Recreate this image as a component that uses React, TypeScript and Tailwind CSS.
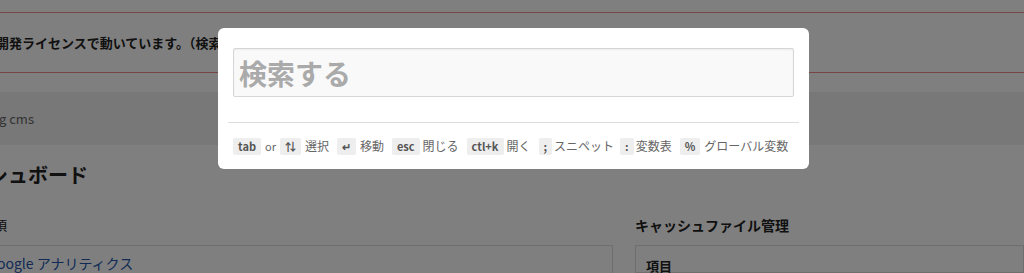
import React from 'react';

const font = { fontFamily: '"Noto Sans CJK JP", "Noto Sans", sans-serif' };

function Kbd({ children }: { children: React.ReactNode }) {
  return (
    <span className="inline-flex h-[17px] items-center rounded-[2px] bg-[#eeeeee] px-[5px] text-[11px] font-bold leading-none text-[#555]">
      {children}
    </span>
  );
}

export default function App() {
  return (
    <div className="relative h-[273px] w-[1024px] overflow-hidden bg-white text-[#333]" style={font}>
      {/* page underneath */}
      <div className="h-[12px]" />
      <div className="flex h-[61px] items-center border-y border-[#f08a8a] bg-white">
        <p className="-ml-[4px] whitespace-nowrap text-[13px] font-bold text-[#222]">
          開発ライセンスで動いています。（検索エンジンからのアクセスを拒否しています）
        </p>
      </div>
      <div className="h-[19px]" />
      <div className="flex h-[53px] items-center bg-[#f0f0f0]">
        <span className="-ml-[1px] text-[13px] text-[#666]">g cms</span>
      </div>
      <div className="flex h-[60px] items-center">
        <h1 className="-ml-[12px] whitespace-nowrap text-[20px] font-bold text-[#222]">シュボード</h1>
      </div>
      <div className="flex">
        <div className="w-[613px]">
          <div className="flex h-[40px] items-center">
            <span className="-ml-[19px] whitespace-nowrap text-[13px] text-[#222]">事項</span>
          </div>
          <div className="h-[28px] border-t border-r border-[#ddd] pt-[4px]">
            <span className="-ml-[3px] whitespace-nowrap text-[14px] text-[#2255aa]">oogle アナリティクス</span>
          </div>
        </div>
        <div className="ml-[22px] flex-1">
          <div className="flex h-[40px] items-center">
            <span className="text-[14px] font-bold text-[#222]">キャッシュファイル管理</span>
          </div>
          <div className="h-[28px] border border-[#ddd] pl-[10px] pt-[6px]">
            <span className="text-[13px] font-bold text-[#222]">項目</span>
          </div>
        </div>
      </div>

      {/* overlay */}
      <div className="absolute inset-0 bg-black/50" />

      {/* search modal */}
      <div className="absolute left-[218px] top-[28px] w-[591px] rounded-[6px] bg-white px-[10px] pt-[20px] pb-[14px]">
        <div className="px-[5px]">
          <div className="flex h-[49px] items-center rounded-[2px] border border-[#d6d6d6] bg-[#f9f9f9] px-[5px] shadow-[inset_0_1px_2px_rgba(0,0,0,0.06)]">
            <span className="text-[28px] font-bold text-[#aaaaaa]">検索する</span>
          </div>
        </div>
        <div className="mt-[25px] border-t border-[#dddddd]" />
        <div className="mt-[14px] flex items-center whitespace-nowrap px-[5px] text-[12px] text-[#666]">
          <Kbd>tab</Kbd>
          <span className="ml-[4px] text-[11px] font-normal">or</span>
          <span className="ml-[4px]"><Kbd>⇅</Kbd></span>
          <span className="ml-[4px]">選択</span>
          <span className="ml-[8px]"><Kbd>↵</Kbd></span>
          <span className="ml-[4px]">移動</span>
          <span className="ml-[8px]"><Kbd>esc</Kbd></span>
          <span className="ml-[3px]">閉じる</span>
          <span className="ml-[8px]"><Kbd>ctl+k</Kbd></span>
          <span className="ml-[3px]">開く</span>
          <span className="ml-[8px]"><Kbd>;</Kbd></span>
          <span className="ml-[2px]">スニペット</span>
          <span className="ml-[6px]"><Kbd>:</Kbd></span>
          <span className="ml-[2px]">変数表</span>
          <span className="ml-[8px]"><Kbd>%</Kbd></span>
          <span className="ml-[4px]">グローバル変数</span>
        </div>
      </div>
    </div>
  );
}
